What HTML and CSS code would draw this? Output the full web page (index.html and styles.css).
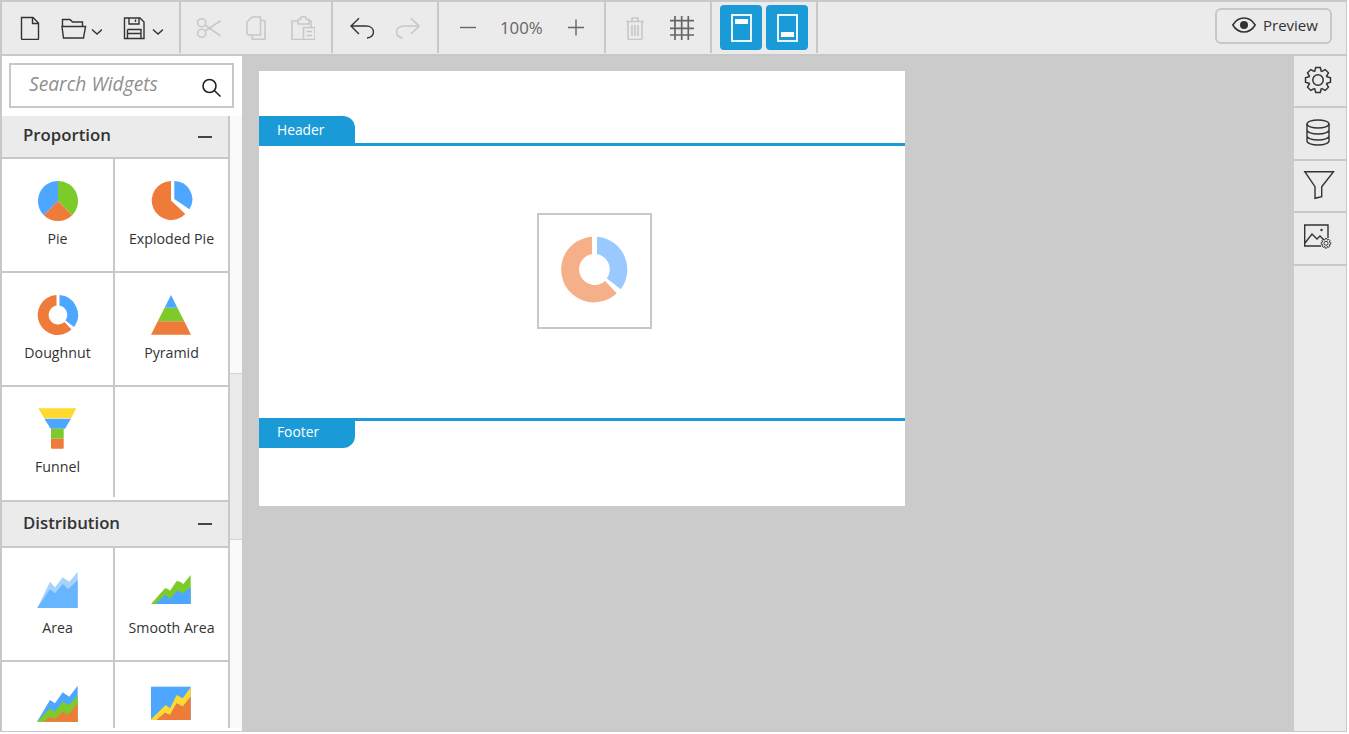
FILE: index.html
```html
<!DOCTYPE html>
<html lang="en">
<head>
    <meta charset="UTF-8">
    <title>Dashboard Designer</title>
    <link rel="stylesheet" href="styles.css">
</head>
<body>
    <svg class="defs" width="0" height="0">
        <symbol id="gear" viewBox="0 0 26 26" overflow="visible">
            <path d="M9.56 4.69 10.74.5H15.26L16.44 4.69"/>
            <path d="M9.56 4.69 10.74.5H15.26L16.44 4.69" transform="rotate(45 13 13)"/>
            <path d="M9.56 4.69 10.74.5H15.26L16.44 4.69" transform="rotate(90 13 13)"/>
            <path d="M9.56 4.69 10.74.5H15.26L16.44 4.69" transform="rotate(135 13 13)"/>
            <path d="M9.56 4.69 10.74.5H15.26L16.44 4.69" transform="rotate(180 13 13)"/>
            <path d="M9.56 4.69 10.74.5H15.26L16.44 4.69" transform="rotate(225 13 13)"/>
            <path d="M9.56 4.69 10.74.5H15.26L16.44 4.69" transform="rotate(270 13 13)"/>
            <path d="M9.56 4.69 10.74.5H15.26L16.44 4.69" transform="rotate(315 13 13)"/>
            <circle cx="13" cy="13" r="5.2"/>
        </symbol>
    </svg>

    <div class="designer">
        <div class="toolbar">
            <div class="tool-group first">
                <svg class="tool" width="24" height="24"><path d="M3.5 1.5H15L20.5 7V22.5a1 1 0 0 1-1 1H4.5a1 1 0 0 1-1-1ZM14.5 1.5V7.5H20.5"/></svg>
                <svg class="tool open" width="44" height="24"><path d="M1.5 10V3.5H9L11.5 6H21.5V10M1 10.5H24.5L22.5 22H2.5Z"/><path d="M31 13.5 36 18 41 13.5"/></svg>
                <svg class="tool save" width="44" height="24"><path d="M2.5 2H18L22 6V22.5H2.5ZM7 2V8H17V2M13.5 3.5V6M5.5 13.5H19V22.5M5.5 13.5V22.5M5.5 17.5H19"/><path d="M31 13.5 36 18 41 13.5"/></svg>
            </div>
            <div class="tool-group cut-group">
                <svg class="tool off" width="24" height="24"><circle cx="4.7" cy="6.7" r="4"/><circle cx="4.7" cy="17.3" r="4"/><path d="M8 9 23.7 20M8 15 23.7 4.7"/></svg>
                <svg class="tool off" width="24" height="24"><path d="M8 1H16.5V19H5a2 2 0 0 1-2-2V6ZM17 4.5H20a1 1 0 0 1 1 1V23.3H9a1 1 0 0 1-1-1V19"/></svg>
                <svg class="tool off" width="24" height="24"><path d="M7 5H1V23.5H12M18 5H20V11M7 3.5H9.5a3 3 0 0 1 6 0H18V8H7ZM12.5 11.5H24V23.5H12.5ZM15.5 15.5H21M15.5 19.5H21"/></svg>
            </div>
            <div class="tool-group undo-group">
                <svg class="tool" width="24" height="24"><path d="M9 2.3 1 10 9 18M1 10H16C20.5 10 23.5 12.5 23.5 16 23.5 19 21 21.5 17 22"/></svg>
                <svg class="tool off" width="24" height="24"><path d="M15 2.3 23 10 15 18M23 10H8C3.5 10 .5 12.5.5 16 .5 19 3 21.5 7 22"/></svg>
            </div>
            <div class="tool-group zoom-group">
                <svg class="tool grey" width="24" height="24"><path d="M4 11.5H20"/></svg>
                <span class="zoom-value">100%</span>
                <svg class="tool grey" width="24" height="24"><path d="M4 11.5H20M12 3.5V19.5"/></svg>
            </div>
            <div class="tool-group trash-group">
                <svg class="tool off" width="24" height="24"><path d="M3 5.5H21M9 5V2H15V5M5 6V22a1.5 1.5 0 0 0 1.5 1.5H17.5A1.5 1.5 0 0 0 19 22V6M9 9V20M12 9V20M15 9V20"/></svg>
                <svg class="tool grid-icon" width="24" height="24"><path d="M0 4.7H24M0 12.3H24M0 19H24M5 0V24M11.7 0V24M18.3 0V24"/></svg>
            </div>
            <div class="tool-group band-group">
                <button class="band-btn"><svg width="42" height="45"><rect class="page" x="12" y="10" width="19" height="26"/><rect class="bar" x="15" y="14" width="13" height="5"/></svg></button>
                <button class="band-btn"><svg width="42" height="45"><rect class="page" x="12" y="10" width="19" height="26"/><rect class="bar" x="15" y="27" width="13" height="5"/></svg></button>
            </div>
            <button class="preview">
                <svg width="24" height="16"><path d="M.8 8C3.5 3.5 7.5 1 12 1s8.5 2.5 11.2 7C20.5 12.5 16.5 15 12 15S3.5 12.5.8 8Z"/><circle cx="12" cy="8" r="4"/></svg>
                Preview
            </button>
        </div>

        <div class="workspace">
            <div class="widget-panel">
                <div class="search-area">
                    <div class="search-box">
                        <input type="text" placeholder="Search Widgets">
                        <svg width="20" height="20"><circle cx="7.5" cy="8" r="6.5"/><path d="M12.3 12.5 18.5 18.5"/></svg>
                    </div>
                </div>
                <div class="widget-scroll">
                    <div class="widget-list">
                        <div class="section-head">Proportion <span class="collapse"></span></div>
                        <div class="widget-grid">
                            <div class="widget">
                                <svg width="42" height="42">
                                    <path class="c-blue" d="M21 21V1A20 20 0 0 0 6.86 35.14Z"/>
                                    <path class="c-green" d="M21 21V1A20 20 0 0 1 35.14 35.14Z"/>
                                    <path class="c-orange" d="M21 21 6.86 35.14A20 20 0 0 0 35.14 35.14Z"/>
                                </svg>
                                <span>Pie</span>
                            </div>
                            <div class="widget">
                                <svg width="42" height="42">
                                    <path class="c-blue" d="M23.3 1A18.5 18.5 0 0 1 38.5 29.3L23.3 19Z"/>
                                    <path class="c-orange" d="M20 20.5V1A19.5 19.5 0 1 0 34.3 34Z"/>
                                </svg>
                                <span>Exploded Pie</span>
                            </div>
                            <div class="widget">
                                <svg width="42" height="42">
                                    <path class="c-blue" d="M22.5 1.06A20 20 0 0 1 37 33L28.5 26.5A9.5 9.5 0 0 0 22.5 11.6Z"/>
                                    <path class="c-orange" d="M19.5 1.06A20 20 0 1 0 34.5 35.5L27.5 28A9.5 9.5 0 1 1 19.5 11.6Z"/>
                                </svg>
                                <span>Doughnut</span>
                            </div>
                            <div class="widget">
                                <svg width="42" height="42">
                                    <path class="c-blue" d="M20 1 26.4 13.7H13.6Z"/>
                                    <path class="c-green" d="M13.6 13.7H26.4L33.25 27.3H6.75Z"/>
                                    <path class="c-orange" d="M6.75 27.3H33.25L40 40.7H0Z"/>
                                </svg>
                                <span>Pyramid</span>
                            </div>
                            <div class="widget last">
                                <svg width="42" height="42">
                                    <path class="c-yellow" d="M1.3.3H39.3L34 10.3H7.3Z"/>
                                    <path class="c-blue" d="M7.3 10.7H34L28 20.7H13.7Z"/>
                                    <rect class="c-green" x="14" y="20.7" width="12.7" height="10"/>
                                    <path class="c-orange" d="M14 30.7H26.7V39.7a1 1 0 0 1-1 1H15a1 1 0 0 1-1-1Z"/>
                                </svg>
                                <span>Funnel</span>
                            </div>
                            <div class="widget last"></div>
                        </div>

                        <div class="section-head with-top">Distribution <span class="collapse"></span></div>
                        <div class="widget-grid">
                            <div class="widget">
                                <svg width="42" height="42">
                                    <path class="c-light" d="M.3 39 13 12.7 18 18.3 25.7 8.3 32.3 12.7 40.7 2.7V39Z"/>
                                    <path class="c-mid" d="M.3 39 13 20.3 18 24.3 25.7 15 31.3 20.3 40.7 11V39Z"/>
                                </svg>
                                <span>Area</span>
                            </div>
                            <div class="widget">
                                <svg width="42" height="42">
                                    <path class="c-green" d="M0 35 14 19.3Q16 19 19 21.7L25.7 12Q29 12 32.3 15L39.7 6V35Z"/>
                                    <path class="c-blue" d="M4 35 14 26Q16 27 19 30L25.7 22Q28 22 31.7 24.3L39.7 18.3V35Z"/>
                                </svg>
                                <span>Smooth Area</span>
                            </div>
                            <div class="widget">
                                <svg width="42" height="42">
                                    <path class="c-blue" d="M0 38.7 13 17 18 20.3 25.7 9.3 32.3 13.7 40.7 2.7V38.7Z"/>
                                    <path class="c-green" d="M0 38.7 13 25.3 18 28.7 25.7 18.7 32.3 22 40.7 12V38.7Z"/>
                                    <path class="c-orange" d="M6.3 38.7 13 33.7 18 36 25.7 28.7 31.3 32 40.7 20.3V38.7Z"/>
                                </svg>
                            </div>
                            <div class="widget">
                                <svg width="42" height="42">
                                    <rect class="c-blue" y="3.7" width="39.7" height="33.3"/>
                                    <path class="c-yellow" d="M0 36.3 14.7 22 19 25.3 25.7 12 31.7 15.3 39.7 4.3V13.7L31.7 23.7 25.7 20.3 19 32 14 29.7 5.7 37H0Z"/>
                                    <path class="c-orange" d="M5.7 37 14 29.7 19 32 25.7 20.3 31.7 23.7 39.7 13.7V37Z"/>
                                </svg>
                            </div>
                        </div>
                    </div>
                    <div class="scroll-track"><div class="scroll-thumb"></div></div>
                </div>
            </div>

            <div class="canvas">
                <div class="sheet">
                    <div class="band-tab top">Header</div>
                    <div class="band-line"></div>
                    <div class="sheet-body">
                        <div class="placed-widget">
                            <svg width="69" height="69" viewBox="0 0 42 42">
                                <path class="p-blue" d="M22.5 1.06A20 20 0 0 1 37 33L28.5 26.5A9.5 9.5 0 0 0 22.5 11.6Z"/>
                                <path class="p-orange" d="M19.5 1.06A20 20 0 1 0 34.5 35.5L27.5 28A9.5 9.5 0 1 1 19.5 11.6Z"/>
                            </svg>
                        </div>
                    </div>
                    <div class="band-line"></div>
                    <div class="band-tab bottom">Footer</div>
                </div>
            </div>

            <div class="side-panel">
                <div class="side-item">
                    <svg width="32" height="32"><use href="#gear" x="1" y="2" width="26" height="26"/></svg>
                </div>
                <div class="side-item">
                    <svg width="32" height="32"><ellipse cx="14" cy="7" rx="11" ry="4"/><path d="M3 7V24C3 26.2 8 28 14 28S25 26.2 25 24V7M3 13C3 15.2 8 17 14 17S25 15.2 25 13M3 19C3 21.2 8 23 14 23S25 21.2 25 19"/></svg>
                </div>
                <div class="side-item">
                    <svg width="32" height="32"><path d="M.8 1.7H29.5L17.7 16.7V26.7L11 28.3V16.7Z"/></svg>
                </div>
                <div class="side-item">
                    <svg width="32" height="32"><path d="M24 16V3H.7V24H17M1 21 8 12 13 17 16 14 20 18"/><circle class="dot" cx="17.5" cy="8" r="1"/><use class="small-gear" href="#gear" x="17" y="16.3" width="10" height="10"/></svg>
                </div>
            </div>
        </div>
    </div>
</body>
</html>
```

FILE: styles.css
```css
* {
    box-sizing: border-box;
}

body {
    margin: 0;
    background-color: #fff;
    font-family: "Open Sans", sans-serif;
    color: #333;
}

.defs {
    display: block;
    height: 0;
}

svg {
    display: block;
    fill: none;
}

.designer {
    width: 1347px;
    height: 732px;
    border: solid #c8c8c8;
    border-width: 2px 1px 1px 2px;
    display: flex;
    flex-direction: column;
    overflow: hidden;
}

/* toolbar */
.toolbar {
    display: flex;
    align-items: flex-start;
    height: 54px;
    flex-shrink: 0;
    background-color: #ebebeb;
    border-bottom: 2px solid #c8c8c8;
}

.tool-group {
    display: flex;
    align-items: flex-start;
    height: 51px;
    padding: 14px 16px 0 16px;
    gap: 23px;
    border-right: 2px solid #c8c8c8;
}

.first {
    width: 179px;
    gap: 21px;
}

.first .save {
    margin-left: -1px;
}

.cut-group {
    width: 152px;
}

.undo-group {
    width: 106px;
    padding-left: 17px;
    gap: 22px;
}

.zoom-group {
    width: 167px;
    padding-left: 17px;
    gap: 20px;
}

.trash-group {
    width: 106px;
    padding-left: 17px;
}

.band-group {
    width: 106px;
    padding: 3px 8px 0 8px;
    gap: 4px;
}

.tool path,
.tool circle {
    stroke: #333;
    stroke-width: 1.4;
}

.tool.off path,
.tool.off circle {
    stroke: #c8c8c8;
    stroke-width: 1.6;
}

.tool.grey path {
    stroke: #666;
}

.grid-icon path {
    stroke: #666;
    stroke-width: 1.7;
}

.zoom-value {
    width: 43px;
    margin-right: 1px;
    font-size: 16.8px;
    line-height: 24px;
    color: #666;
    white-space: nowrap;
}

.band-btn {
    width: 42px;
    height: 45px;
    padding: 0;
    border: 0;
    border-radius: 4px;
    background-color: #1a9bd7;
}

.band-btn .page {
    stroke: #fff;
    stroke-width: 1.8;
}

.band-btn .bar {
    fill: #fff;
}

.preview {
    display: flex;
    align-items: center;
    gap: 7px;
    width: 117px;
    height: 36px;
    margin: 6px 14px 0 auto;
    padding: 0 0 3px 15px;
    border: 2px solid #c8c8c8;
    border-radius: 6px;
    background-color: #ebebeb;
    font-family: "Open Sans", sans-serif;
    font-size: 15px;
    color: #333;
}

.preview path {
    stroke: #333;
    stroke-width: 1.5;
}

.preview circle {
    fill: #333;
}

/* main area */
.workspace {
    display: flex;
    flex: 1;
    min-height: 0;
}

.widget-panel {
    width: 240px;
    flex-shrink: 0;
    background-color: #fff;
}

.search-area {
    height: 60px;
    padding: 7px 0 0 7px;
}

.search-box {
    display: flex;
    align-items: center;
    width: 225px;
    height: 45px;
    border: 2px solid #c8c8c8;
}

.search-box input {
    flex: 1;
    min-width: 0;
    height: 100%;
    padding: 0 0 4px 18px;
    border: 0;
    outline: 0;
    background: transparent;
    font-family: "Open Sans", sans-serif;
    font-size: 19.2px;
    font-style: italic;
}

.search-box input::placeholder {
    color: #8f8f8f;
    opacity: 1;
}

.search-box svg {
    margin: 4px 10px 0 0;
}

.search-box circle,
.search-box path {
    stroke: #222;
    stroke-width: 1.6;
}

.widget-scroll {
    display: flex;
    height: 612px;
}

.widget-list {
    width: 228px;
    height: 612px;
    overflow: hidden;
    border-right: 2px solid #c8c8c8;
}

.scroll-track {
    width: 12px;
    background-color: #fafafa;
}

.scroll-thumb {
    height: 167px;
    margin-top: 257px;
    background-color: #ebebeb;
    border: solid #d4d4d4;
    border-width: 1px 0;
}

.section-head {
    display: flex;
    align-items: center;
    justify-content: space-between;
    height: 43px;
    padding: 0 16px 4px 21px;
    background-color: #ebebeb;
    border-bottom: 2px solid #c8c8c8;
    font-size: 16.8px;
    font-weight: 600;
}

.section-head .collapse {
    margin-top: 4px;
}

.section-head.with-top {
    height: 48px;
    padding-bottom: 4px;
    border-top: 2px solid #c8c8c8;
}

.section-head.with-top .collapse {
    margin-top: 4px;
}

.collapse {
    width: 14px;
    height: 2px;
    background-color: #444;
}

.widget-grid {
    display: grid;
    grid-template-columns: 113px 113px;
}

.widget {
    display: flex;
    flex-direction: column;
    align-items: center;
    height: 114px;
    padding-top: 21px;
    border-bottom: 2px solid #c8c8c8;
    font-size: 14.2px;
    line-height: 20px;
    white-space: nowrap;
}

.widget:nth-child(odd) {
    border-right: 2px solid #c8c8c8;
}

.widget span {
    margin-top: 7px;
}

.widget.last {
    height: 110px;
    margin-bottom: 3px;
    border-bottom: 0;
}

.c-blue { fill: #4da6ff; }
.c-green { fill: #7dcb2a; }
.c-orange { fill: #ef7b3a; }
.c-yellow { fill: #ffd92f; }
.c-light { fill: #a8d2fb; }
.c-mid { fill: #67b4ff; }
.p-blue { fill: #99c9ff; }
.p-orange { fill: #f5b08a; }

/* canvas */
.canvas {
    flex: 1;
    padding: 15px 0 0 17px;
    background-color: #cbcbcb;
}

.sheet {
    width: 646px;
    height: 435px;
    padding-top: 45px;
    background-color: #fff;
}

.band-tab {
    width: 96px;
    height: 27px;
    padding-left: 18px;
    background-color: #1a9bd7;
    color: #fff;
    font-size: 13.8px;
    line-height: 27px;
}

.band-tab.top {
    border-top-right-radius: 12px;
}

.band-tab.bottom {
    border-bottom-right-radius: 12px;
    line-height: 21px;
}

.band-line {
    height: 3px;
    background-color: #1a9bd7;
}

.sheet-body {
    height: 272px;
    padding: 67px 0 0 278px;
}

.placed-widget {
    display: flex;
    align-items: center;
    justify-content: center;
    width: 115px;
    height: 116px;
    padding-bottom: 4px;
    border: 2px solid #c8c8c8;
}

/* right side tabs */
.side-panel {
    width: 52px;
    flex-shrink: 0;
    background-color: #ebebeb;
}

.side-item {
    height: 52px;
    padding: 9px 0 0 10px;
    border-bottom: 2px solid #c8c8c8;
}

.side-item:nth-child(even) {
    height: 53px;
}

.side-item svg {
    overflow: visible;
}

.side-item path,
.side-item ellipse,
.side-item circle {
    stroke: #333;
    stroke-width: 1.4;
}

.side-item use {
    stroke: #333;
    stroke-width: 1.5;
}

.side-item .small-gear {
    stroke-width: 2.4;
}

.side-item .dot {
    fill: #333;
    stroke-width: .5;
}
```
